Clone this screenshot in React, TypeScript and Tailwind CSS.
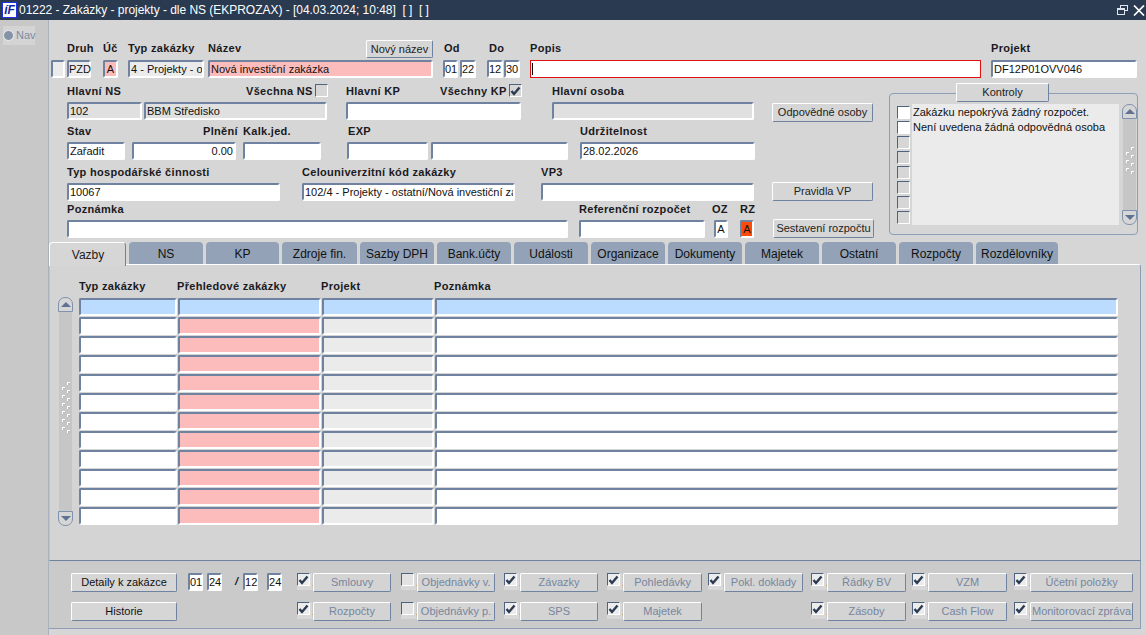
import React from "react";

const inputBase =
  "h-[18px] shrink-0 rounded-[2px] border-2 border-t-[#6f83a0] border-l-[#6f83a0] border-r-white border-b-white px-[1px] text-[11px] leading-[14px] text-[#111] overflow-hidden whitespace-nowrap";

function Field({ className = "", children }: { className?: string; children?: React.ReactNode }) {
  return <div className={`${inputBase} ${className}`}>{children}</div>;
}

function Label({ className = "", children }: { className?: string; children: React.ReactNode }) {
  return <span className={`shrink-0 whitespace-nowrap text-[11px] font-bold tracking-[0.3px] text-[#1a1a22] ${className}`}>{children}</span>;
}

function Btn({ className = "", disabled = false, children }: { className?: string; disabled?: boolean; children: React.ReactNode }) {
  return (
    <div
      className={`flex shrink-0 items-center justify-center whitespace-nowrap rounded-[2px] border border-t-white border-l-white border-r-[#6f83a0] border-b-[#6f83a0] text-[11px] ${
        disabled ? "bg-[#d4d4d4] text-[#76869e]" : "bg-[#d6d6d6] text-[#1a1a22]"
      } ${className}`}
    >
      {children}
    </div>
  );
}

function Check({ checked = false, className = "" }: { checked?: boolean; className?: string }) {
  return (
    <div className={`flex h-[13px] w-[13px] shrink-0 items-center justify-center border border-t-[#4f6280] border-l-[#4f6280] border-r-white border-b-white ${className}`}>
      {checked && (
        <svg width="11" height="10" viewBox="0 0 11 10">
          <path d="M1.5 5 L4 8 L9.5 1.5" fill="none" stroke="#2a3a50" strokeWidth="2.4" />
        </svg>
      )}
    </div>
  );
}

function Dot() {
  return <div className="h-[3px] w-[3px] border-l border-t border-l-white border-t-white bg-[#b8bcc4]" />;
}

function Dots({ left, right }: { left: number; right: number }) {
  return (
    <div className="flex gap-[2px]">
      <div className="mt-[5px] flex flex-col gap-[5px]">
        {Array.from({ length: left }, (_, i) => (
          <Dot key={i} />
        ))}
      </div>
      <div className="flex flex-col gap-[5px]">
        {Array.from({ length: right }, (_, i) => (
          <Dot key={i} />
        ))}
      </div>
    </div>
  );
}

function ScrollBar({ className = "", left, right }: { className?: string; left: number; right: number }) {
  return (
    <div className={`flex w-[15px] shrink-0 flex-col items-center ${className}`}>
      <div className="flex h-[15px] w-[15px] shrink-0 items-center justify-center rounded-t-[7px] border border-[#7f92ad] bg-[#d6d6d6]">
        <div className="h-0 w-0 border-x-[5px] border-b-[5px] border-x-transparent border-b-[#5f7391]" />
      </div>
      <div className="flex w-[13px] flex-1 items-center justify-center bg-[#c6c6c6] pb-[8px]">
        <Dots left={left} right={right} />
      </div>
      <div className="flex h-[15px] w-[15px] shrink-0 items-center justify-center rounded-b-[7px] border border-[#7f92ad] bg-[#d6d6d6]">
        <div className="h-0 w-0 border-x-[5px] border-t-[5px] border-x-transparent border-t-[#5f7391]" />
      </div>
    </div>
  );
}

const tabs: [string, string][] = [
  ["NS", "w-[74px]"],
  ["KP", "w-[73px]"],
  ["Zdroje fin.", "w-[75px]"],
  ["Sazby DPH", "w-[74px]"],
  ["Bank.účty", "w-[74px]"],
  ["Události", "w-[74px]"],
  ["Organizace", "w-[74px]"],
  ["Dokumenty", "w-[74px]"],
  ["Majetek", "w-[74px]"],
  ["Ostatní", "w-[74px]"],
  ["Rozpočty", "w-[74px]"],
  ["Rozdělovníky", "w-[82px]"],
];

function Slot({ checked, label, btn, slot }: { checked: boolean; label: string; btn: string; slot: string }) {
  return (
    <div className={`flex shrink-0 items-start ${slot}`}>
      <div className="flex h-[17px] w-[15px] shrink-0 bg-[#d8d8d8]">
        <Check checked={checked} className={checked ? "bg-[#ececec]" : "bg-[#e2e2e2]"} />
      </div>
      <div className="mt-[12px] h-[1px] w-[1px] shrink-0 bg-[#d9a860]" />
      <Btn disabled className={`h-[19px] ${btn}`}>{label}</Btn>
    </div>
  );
}

const rows = Array.from({ length: 12 }, (_, i) => i);

export default function App() {
  return (
    <div className="flex h-[635px] w-full flex-col overflow-hidden bg-[#d6d6d6] font-['Liberation_Sans',Arial,sans-serif]">
      <div className="flex h-[20px] shrink-0 items-center bg-[#2a3a50] text-white">
        <div className="ml-[2px] flex h-[16px] w-[15px] items-center justify-center border border-[#2233dd] bg-white text-[12px] font-bold italic leading-none text-[#14239c]">
          íF
        </div>
        <span className="ml-[2px] whitespace-nowrap text-[12px] tracking-[-0.03px]">01222 - Zakázky - projekty - dle NS (EKPROZAX) - [04.03.2024; 10:48]&nbsp; [ ]&nbsp; [ ]</span>
        <div className="ml-auto mr-[1px] flex items-center gap-[5px]">
          <svg width="11" height="10" viewBox="0 0 11 10" fill="none" stroke="#dfe5ec" strokeWidth="1">
            <rect x="3.5" y="0.5" width="7" height="5" />
            <rect x="0.5" y="3.5" width="7" height="6" fill="#2a3a50" />
            <path d="M0.5 4.5 H7.5" />
          </svg>
          <svg width="12" height="11" viewBox="0 0 12 11" fill="none" stroke="#fff" strokeWidth="1.7">
            <path d="M1 0.5 L11 10.5 M11 0.5 L1 10.5" />
          </svg>
        </div>
      </div>

      <div className="flex min-h-0 flex-1">
        <div className="w-[49px] shrink-0 border-r border-r-[#aab2be] bg-[#c8c8c8] pl-[3px] pt-[6px]">
          <div className="flex h-[19px] w-[32px] items-center gap-[2px] bg-[#d4d4d4]">
            <div className="h-[11px] w-[11px] shrink-0 rounded-full border border-[#eeeeee] bg-[#8593a6]" />
            <span className="text-[11px] text-[#7c8ba3]">Nav</span>
          </div>
        </div>

        <div className="flex min-w-0 flex-1 flex-col">
          {/* first row */}
          <div className="mt-[20px] flex h-[20px] shrink-0 items-start pl-[18px]">
            <Label className="w-[36px]">Druh</Label>
            <Label className="w-[25px]">Úč</Label>
            <Label className="w-[80px]">Typ zakázky</Label>
            <Label className="w-[158px]">Název</Label>
            <Btn className="h-[18px] w-[67px] text-[#222]">Nový název</Btn>
            <Label className="ml-[11px] w-[45px]">Od</Label>
            <Label className="w-[41px]">Do</Label>
            <Label className="w-[461px]">Popis</Label>
            <Label>Projekt</Label>
          </div>
          <div className="flex h-[18px] shrink-0">
            <Field className="ml-[2px] w-[14px] bg-[#ebebeb]" />
            <Field className="ml-[2px] w-[24px] bg-[#ebebeb] !overflow-visible !px-0">PZD</Field>
            <Field className="ml-[12px] w-[15px] bg-[#fdbcbc] !overflow-visible !px-0 text-center">A</Field>
            <Field className="ml-[10px] w-[76px] bg-[#ebebeb]">4 - Projekty - os</Field>
            <Field className="ml-[4px] w-[225px] bg-[#fdbcbc]">Nová investiční zakázka</Field>
            <Field className="ml-[10px] w-[15px] bg-white !overflow-visible !px-0">01</Field>
            <Field className="ml-[2px] w-[16px] bg-white !overflow-visible !px-0">22</Field>
            <Field className="ml-[11px] w-[16px] bg-white !overflow-visible !px-0">12</Field>
            <Field className="ml-[1px] w-[16px] bg-white !overflow-visible !px-0">30</Field>
            <div className="ml-[10px] h-[18px] w-[451px] shrink-0 border border-[#e01010] bg-white">
              <div className="ml-[1px] mt-[2px] h-[12px] w-[1px] bg-black" />
            </div>
            <Field className="ml-[10px] w-[146px] bg-white">DF12P01OVV046</Field>
          </div>

          <div className="flex shrink-0">
            {/* left fields */}
            <div className="w-[832px] shrink-0">
              <div className="flex h-[24px] items-center pl-[18px] pt-[2px]">
                <Label className="w-[179px]">Hlavní NS</Label>
                <Label className="w-[69px]">Všechna NS</Label>
                <Check className="-mt-[1px] bg-[#d6d6d6]" />
                <Label className="ml-[18px] w-[94px]">Hlavní KP</Label>
                <Label className="w-[69px]">Všechny KP</Label>
                <Check checked className="-mt-[1px] bg-[#d6d6d6]" />
                <Label className="ml-[30px]">Hlavní osoba</Label>
              </div>
              <div className="flex h-[18px]">
                <Field className="ml-[18px] w-[75px] bg-[#e0e0e0]">102</Field>
                <Field className="ml-[2px] w-[183px] bg-[#e0e0e0]">BBM Středisko</Field>
                <Field className="ml-[19px] w-[175px] bg-white" />
                <Field className="ml-[31px] w-[202px] bg-[#e0e0e0]" />
                <Btn className="ml-[18px] mt-[1px] h-[19px] w-[101px] text-[#222]">Odpovědné osoby</Btn>
              </div>

              <div className="flex h-[22px] items-center pl-[18px]">
                <Label className="w-[136px]">Stav</Label>
                <Label className="w-[40px]">Plnění</Label>
                <Label className="w-[105px]">Kalk.jed.</Label>
                <Label className="w-[232px]">EXP</Label>
                <Label>Udržitelnost</Label>
              </div>
              <div className="flex h-[18px]">
                <Field className="ml-[18px] w-[58px] bg-white">Zařadit</Field>
                <Field className="ml-[7px] w-[104px] bg-white text-right">0.00</Field>
                <Field className="ml-[7px] w-[78px] bg-white" />
                <Field className="ml-[26px] w-[81px] bg-white" />
                <Field className="ml-[3px] w-[137px] bg-white" />
                <Field className="ml-[12px] w-[175px] bg-white">28.02.2026</Field>
              </div>

              <div className="flex h-[23px] items-center pl-[18px] pt-[2px]">
                <Label className="w-[235px]">Typ hospodářské činnosti</Label>
                <Label className="w-[239px]">Celouniverzitní kód zakázky</Label>
                <Label>VP3</Label>
              </div>
              <div className="flex h-[18px]">
                <Field className="ml-[18px] w-[213px] bg-white">10067</Field>
                <Field className="ml-[22px] w-[213px] bg-white">102/4 - Projekty - ostatní/Nová investiční za</Field>
                <Field className="ml-[26px] w-[213px] bg-white" />
                <Btn className="ml-[18px] -mt-[1px] h-[19px] w-[101px] text-[#222]">Pravidla VP</Btn>
              </div>

              <div className="flex h-[19px] items-start pl-[18px]">
                <Label className="w-[512px]">Poznámka</Label>
                <Label className="w-[133px]">Referenční rozpočet</Label>
                <Label className="w-[28px]">OZ</Label>
                <Label>RZ</Label>
              </div>
              <div className="flex h-[18px]">
                <Field className="ml-[18px] w-[501px] bg-white" />
                <Field className="ml-[11px] w-[126px] bg-white" />
                <Field className="ml-[9px] w-[14px] bg-white !overflow-visible !px-0 text-center">A</Field>
                <Field className="ml-[12px] w-[14px] bg-[#fb4a0a] !overflow-visible !px-0 text-center">A</Field>
                <Btn className="ml-[19px] -mt-[1px] h-[19px] w-[101px] text-[#222]">Sestavení rozpočtu</Btn>
              </div>
            </div>

            {/* Kontroly */}
            <div className="ml-[8px] flex w-[249px] shrink-0 flex-col pt-[5px]">
              <Btn className="relative z-10 ml-[67px] h-[19px] w-[93px] text-[#222]">Kontroly</Btn>
              <div className="-mt-[9px] flex h-[142px] rounded-[4px] border border-[#8c9db5] pl-[7px] pt-[10px]">
                <div className="flex h-[121px] w-[15px] shrink-0 flex-col gap-[2px] pt-[2px]">
                  <Check className="bg-white" />
                  <Check className="bg-white" />
                  {[0, 1, 2, 3, 4, 5].map((i) => (
                    <Check key={i} className="bg-[#d6d6d6]" />
                  ))}
                </div>
                <div className="h-[121px] w-[207px] shrink-0 bg-[#ebebeb] pl-[1px] text-[11px] leading-[15px] text-[#111]">
                  <div className="whitespace-nowrap pt-[1px]">Zakázku nepokrývá žádný rozpočet.</div>
                  <div className="whitespace-nowrap">Není uvedena žádná odpovědná osoba</div>
                </div>
                <ScrollBar left={3} right={4} className="ml-[3px] h-[121px]" />
              </div>
            </div>
          </div>

          {/* tabs */}
          <div className="mt-[4px] flex h-[22px] shrink-0 gap-[3px]">
            <div className="relative z-10 flex h-[24px] w-[77px] items-center justify-center rounded-t-[4px] border-l border-r border-t border-l-white border-r-[#6f83a0] border-t-white bg-[#d6d6d6] pl-[1px] pt-[1px] text-[12px] text-[#222]">
              Vazby
            </div>
            {tabs.map(([t, w]) => (
              <div key={t} className={`flex items-center justify-center rounded-t-[4px] bg-[#93a2b6] pt-[2px] text-[12px] text-[#111] ${w}`}>
                {t}
              </div>
            ))}
          </div>

          {/* panel */}
          <div className="mr-[5px] h-[297px] shrink-0 rounded-tr-[3px] border-b border-l border-r border-t border-b-[#6f83a0] border-l-[#c2c2c2] border-r-[#8c9db5] border-t-white bg-[#d4d4d4]">
            <div className="flex h-[33px] items-end pb-[4px] pl-[29px]">
              <Label className="w-[98px]">Typ zakázky</Label>
              <Label className="w-[144px]">Přehledové zakázky</Label>
              <Label className="w-[113px]">Projekt</Label>
              <Label>Poznámka</Label>
            </div>
            <div className="flex">
              <ScrollBar left={6} right={7} className="ml-[8px] -mt-[1px] h-[229px]" />
              <div className="ml-[6px] flex flex-col gap-[1px]">
                {rows.map((i) => (
                  <div key={i} className="flex gap-[1px]">
                    <Field className={`w-[98px] ${i === 0 ? "bg-[#bcdcff]" : "bg-white"}`} />
                    <Field className={`w-[143px] ${i === 0 ? "bg-[#bcdcff]" : "bg-[#fdbcbc]"}`} />
                    <Field className={`w-[112px] ${i === 0 ? "bg-[#bcdcff]" : "bg-[#ebebeb]"}`} />
                    <Field className={`w-[683px] ${i === 0 ? "bg-[#bcdcff]" : "bg-white"}`} />
                  </div>
                ))}
              </div>
            </div>
          </div>

          {/* bottom */}
          <div className="mr-[5px] flex h-[68px] shrink-0 flex-col gap-[10px] border-b border-r border-b-[#8c9db5] border-r-[#8c9db5] bg-[#cacaca] pt-[12px]">
            <div className="flex h-[19px] items-start">
              <Btn className="ml-[22px] h-[19px] w-[106px] text-[#111]">Detaily k zakázce</Btn>
              <Field className="ml-[11px] w-[15px] bg-white !overflow-visible !px-0">01</Field>
              <Field className="ml-[4px] w-[15px] bg-white !overflow-visible !px-0">24</Field>
              <span className="ml-[13px] text-[11px] font-bold italic text-[#222]">/</span>
              <Field className="ml-[5px] w-[15px] bg-white !overflow-visible !px-0">12</Field>
              <Field className="ml-[9px] w-[15px] bg-white !overflow-visible !px-0">24</Field>
              <div className="ml-[15px] flex">
                <Slot checked label="Smlouvy" slot="w-[104px]" btn="w-[78px]" />
                <Slot checked={false} label="Objednávky v." slot="w-[103px]" btn="w-[78px]" />
                <Slot checked label="Závazky" slot="w-[103px]" btn="w-[78px]" />
                <Slot checked label="Pohledávky" slot="w-[101px]" btn="w-[79px]" />
                <Slot checked label="Pokl. doklady" slot="w-[103px]" btn="w-[79px]" />
                <Slot checked label="Řádky BV" slot="w-[101px]" btn="w-[79px]" />
                <Slot checked label="VZM" slot="w-[102px]" btn="w-[79px]" />
                <Slot checked label="Účetní položky" slot="w-[120px]" btn="w-[103px]" />
              </div>
            </div>
            <div className="flex h-[19px] items-start">
              <Btn className="ml-[22px] h-[19px] w-[106px] text-[#111]">Historie</Btn>
              <div className="ml-[120px] flex">
                <Slot checked label="Rozpočty" slot="w-[104px]" btn="w-[78px]" />
                <Slot checked={false} label="Objednávky p." slot="w-[103px]" btn="w-[78px]" />
                <Slot checked label="SPS" slot="w-[103px]" btn="w-[78px]" />
                <Slot checked label="Majetek" slot="w-[204px]" btn="w-[79px]" />
                <Slot checked label="Zásoby" slot="w-[101px]" btn="w-[79px]" />
                <Slot checked label="Cash Flow" slot="w-[102px]" btn="w-[79px]" />
                <Slot checked label="Monitorovací zpráva" slot="w-[120px]" btn="w-[103px]" />
              </div>
            </div>
          </div>
        </div>
      </div>
    </div>
  );
}
